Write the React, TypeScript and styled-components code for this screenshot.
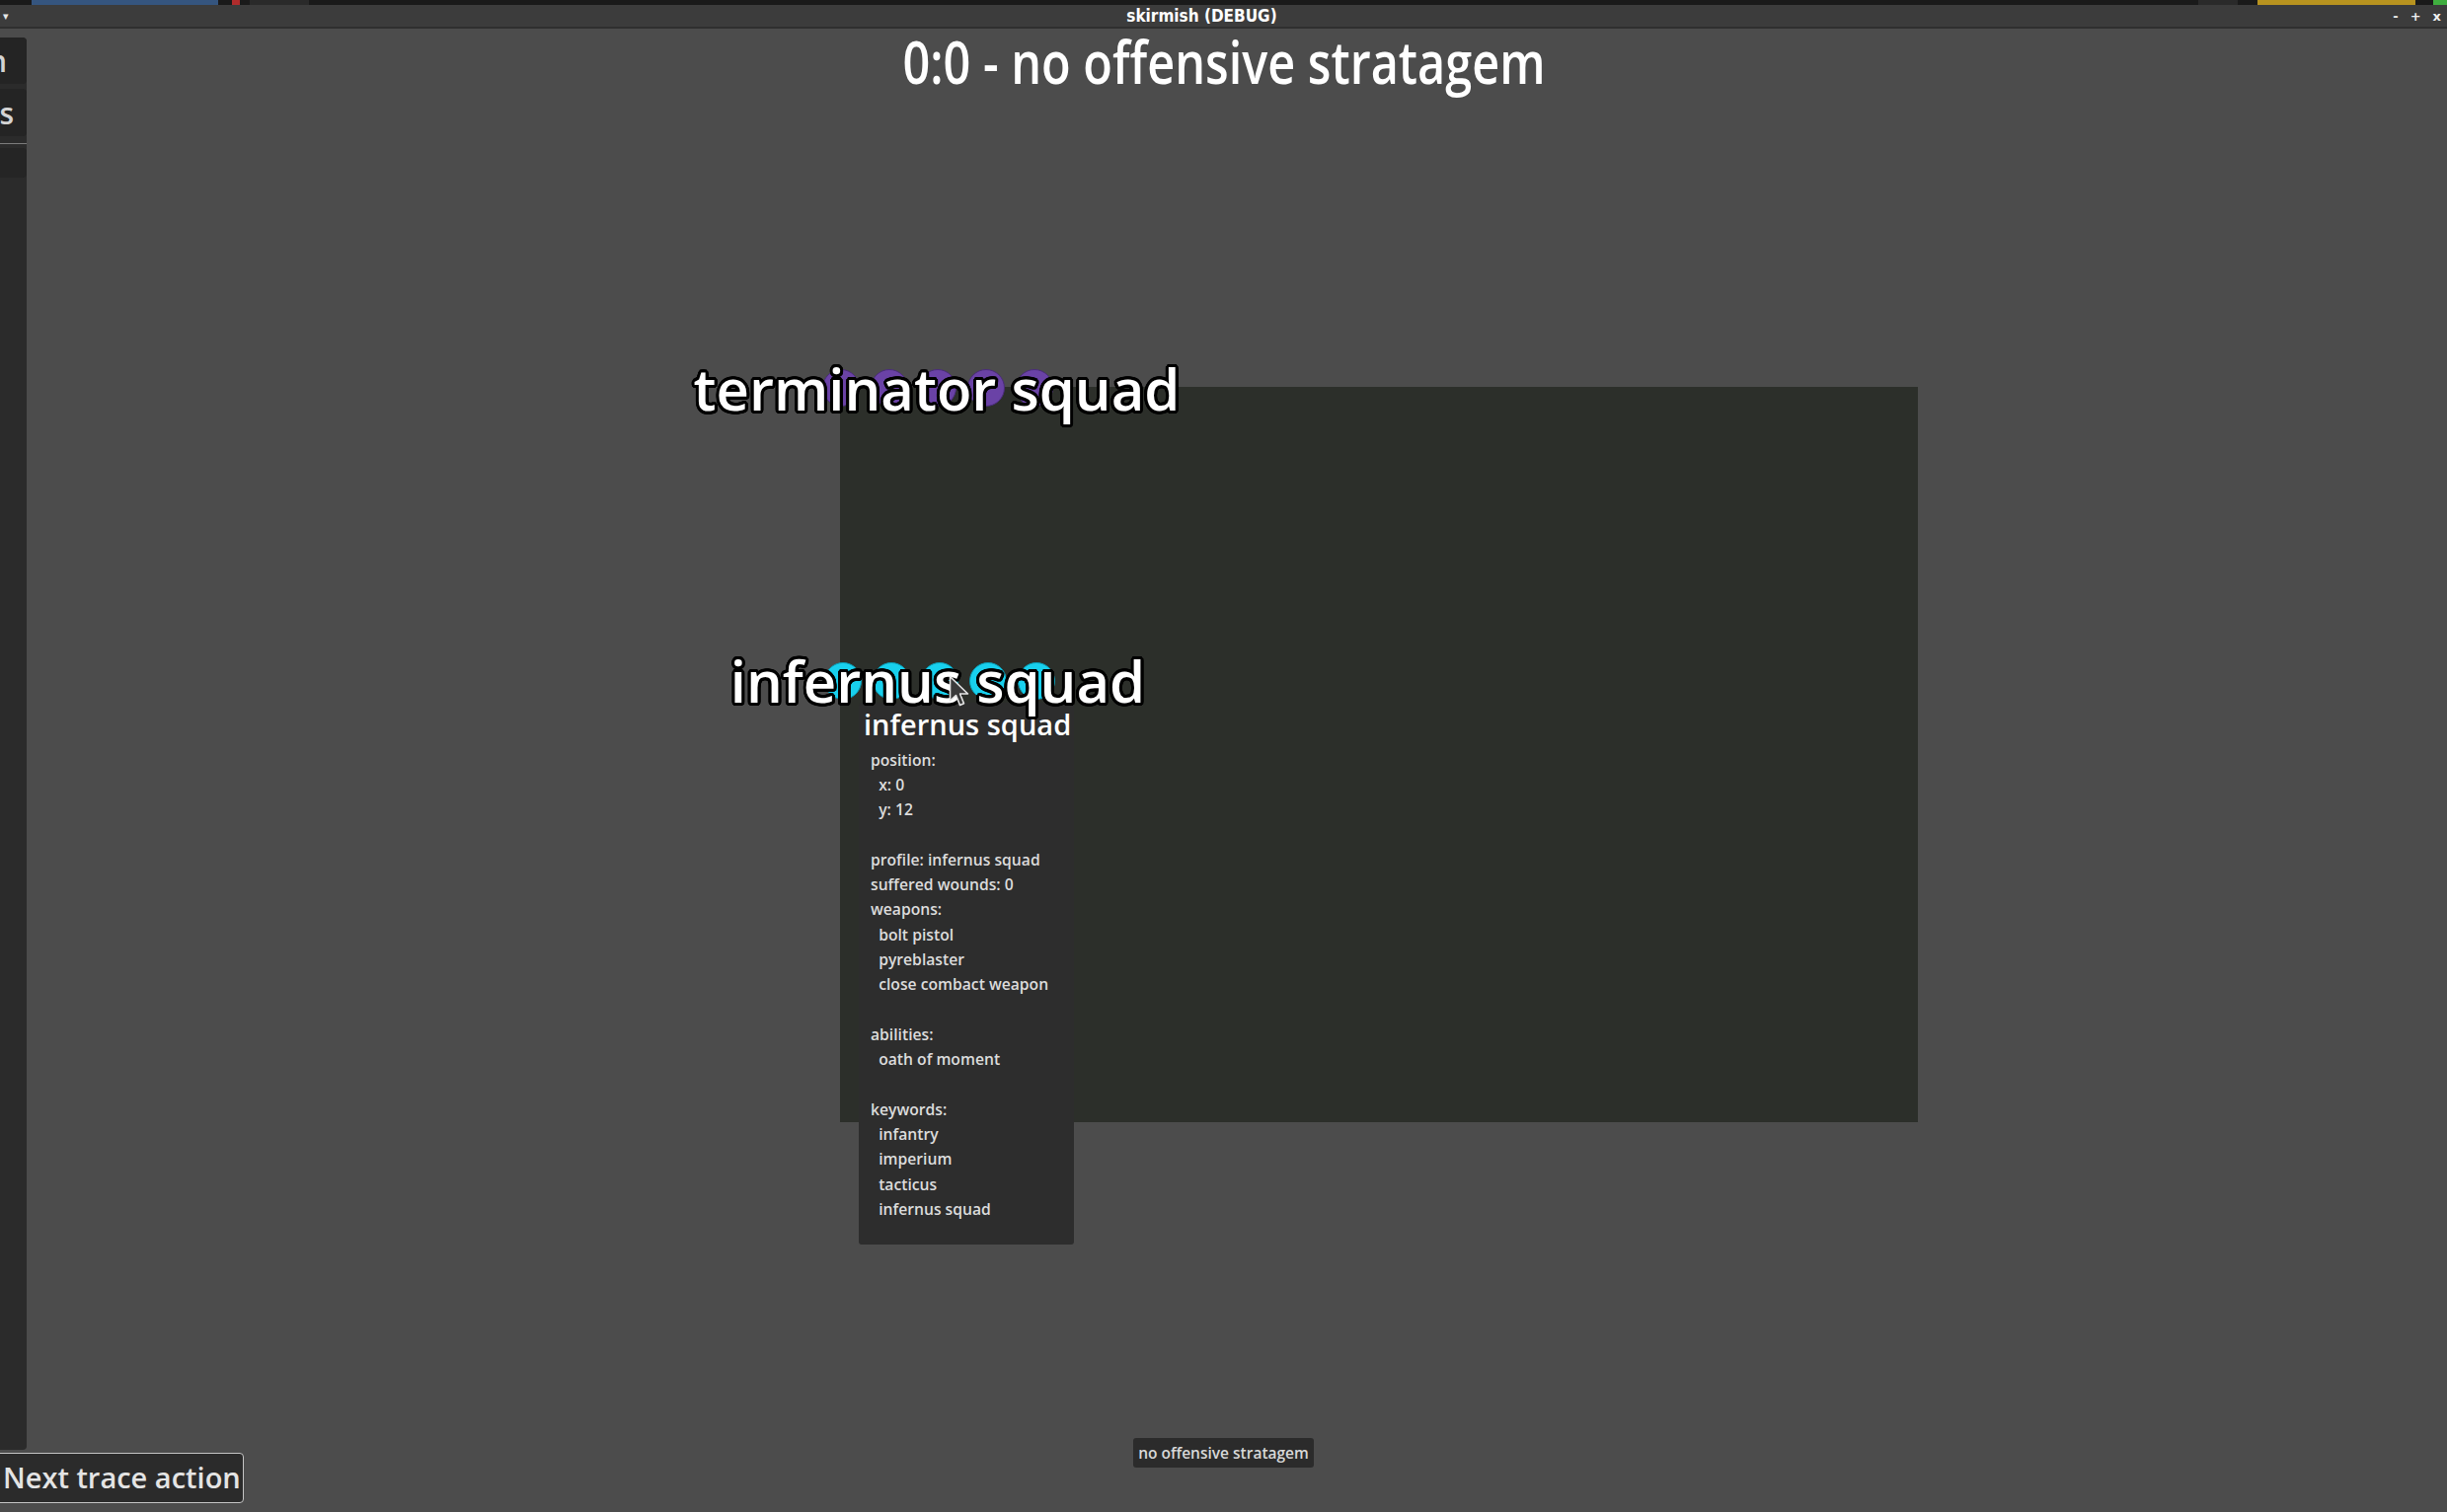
import React from "react";
import styled, { createGlobalStyle } from "styled-components";

const Global = createGlobalStyle`
  html, body { margin: 0; padding: 0; background: #4c4c4c; overflow: hidden; }
  #root { width: 2479px; height: 1532px; }
  * { box-sizing: border-box; }
`;

const outline = (r: number, color: string) => {
  const parts: string[] = [];
  for (let i = 0; i < 24; i++) {
    const a = (i / 24) * Math.PI * 2;
    parts.push(`${(Math.cos(a) * r).toFixed(2)}px ${(Math.sin(a) * r).toFixed(2)}px 0 ${color}`);
  }
  return parts.join(", ");
};

const Screen = styled.div`
  width: 2479px;
  height: 1532px;
  display: flex;
  flex-direction: column;
  font-family: "Open Sans", "Noto Sans", sans-serif;
  background: #4c4c4c;
  overflow: hidden;
`;

const SystemStrip = styled.div`
  height: 5px;
  background: #1a1a1a;
  display: flex;
  flex-shrink: 0;
`;

const StripItem = styled.div<{ $w: number; $color: string; $ml?: number }>`
  width: ${(p) => p.$w}px;
  margin-left: ${(p) => p.$ml ?? 0}px;
  background: ${(p) => p.$color};
`;

const StripSpacer = styled.div`
  flex: 1;
`;

const TitleBar = styled.div`
  height: 22px;
  flex-shrink: 0;
  background: #3c3c3c;
  display: grid;
  grid-template-columns: 36px 1fr 80px;
  align-items: center;
  color: #ffffff;
`;

const MenuArrow = styled.div`
  font-family: "DejaVu Sans", sans-serif;
  font-size: 11px;
  padding-left: 3px;
  color: #e8e8e8;
`;

const WindowTitle = styled.div`
  text-align: center;
  font-family: "DejaVu Sans Condensed", "DejaVu Sans", sans-serif;
  font-stretch: condensed;
  font-weight: 700;
  font-size: 17px;
  line-height: 22px;
  white-space: nowrap;
`;

const Controls = styled.div`
  display: flex;
  justify-content: flex-end;
  gap: 12px;
  padding-right: 6px;
  font-family: "DejaVu Sans", sans-serif;
  font-weight: 700;
  font-size: 13px;
  color: #f0f0f0;
`;

const Separator = styled.div`
  height: 2px;
  flex-shrink: 0;
  background: #2f2f2f;
`;

const Viewport = styled.div`
  flex: 1;
  position: relative;
  background: #4c4c4c;
  overflow: hidden;
`;

const World = styled.div`
  position: absolute;
  inset: 0;
`;

const Board = styled.div`
  position: absolute;
  left: 851px;
  top: 363px;
  width: 1092px;
  height: 745px;
  background: #2c2f2a;
`;

const Token = styled.div<{ $fill: string; $edge: string }>`
  position: absolute;
  width: 38px;
  height: 38px;
  border-radius: 50%;
  background: ${(p) => p.$fill};
  border: 1.5px solid ${(p) => p.$edge};
  transform: translate(-50%, -50%);
`;

const UnitLabel = styled.div`
  position: absolute;
  transform: translate(-50%, -50%);
  font-size: 58px;
  font-weight: 600;
  line-height: 80px;
  color: #ffffff;
  white-space: nowrap;
  text-shadow: ${outline(3, "#000")}, ${outline(1.6, "#000")};
`;

const Tooltip = styled.div`
  position: absolute;
  left: 870px;
  top: 683px;
  width: 218px;
  background: #2d2d2d;
  border-radius: 3px;
  padding: 1px 0 23px 0;
`;

const TooltipTitle = styled.div`
  font-size: 29px;
  font-weight: 600;
  line-height: 41px;
  color: #ffffff;
  padding-left: 5px;
  white-space: nowrap;
`;

const TooltipBody = styled.div`
  margin-top: 3.5px;
  padding-left: 12px;
  font-size: 15.7px;
  font-weight: 600;
  line-height: 25.3px;
  color: #dcdcdc;
  white-space: pre;
`;

const Cursor = styled.svg`
  position: absolute;
  left: 961px;
  top: 655px;
`;

const Hud = styled.div`
  position: absolute;
  inset: 0;
  display: flex;
`;

const LeftColumn = styled.div`
  width: 27px;
  flex-shrink: 0;
  display: flex;
  flex-direction: column;
  padding: 9px 0 9px;
  gap: 3px;
`;

const Sidebar = styled.div`
  flex: 1;
  background: #2b2b2b;
  border-radius: 0 4px 4px 0;
  display: flex;
  flex-direction: column;
  overflow: hidden;
`;

const SideButton = styled.div<{ $h: number; $pr: number; $mt?: number }>`
  height: ${(p) => p.$h}px;
  margin-top: ${(p) => p.$mt ?? 0}px;
  background: #242424;
  border-radius: 0 4px 4px 0;
  display: flex;
  justify-content: flex-end;
  align-items: center;
  padding-right: ${(p) => p.$pr}px;
  font-size: 30px;
  font-weight: 600;
  color: #d4d4d4;
  white-space: nowrap;
  overflow: hidden;
  flex-shrink: 0;
`;

const SideRule = styled.div`
  height: 1px;
  margin-top: 7px;
  background: #7c7c7c;
  flex-shrink: 0;
`;

const SideItem = styled.div`
  height: 30px;
  margin-top: 4px;
  background: #252525;
  border-radius: 0 4px 4px 0;
  flex-shrink: 0;
`;

const NextButton = styled.div`
  align-self: flex-start;
  flex-shrink: 0;
  width: 253px;
  height: 51px;
  margin-left: -6px;
  border: 1.5px solid #c4c4c4;
  border-radius: 4px;
  background: #2b2b2b;
  padding-left: 8px;
  font-size: 29px;
  font-weight: 600;
  line-height: 48px;
  color: #e4e4e4;
  white-space: nowrap;
`;

const CenterColumn = styled.div`
  flex: 1;
  margin-right: 27px;
  display: flex;
  flex-direction: column;
  align-items: center;
`;

const HeadTitle = styled.div`
  margin-top: 3px;
  font-size: 60px;
  font-weight: 600;
  line-height: 60px;
  color: #ffffff;
  white-space: nowrap;
  transform: scaleX(0.81);
`;

const Spacer = styled.div`
  flex: 1;
`;

const StratagemTag = styled.div`
  margin-bottom: 45px;
  height: 30px;
  padding: 0 5px;
  background: #2b2b2b;
  border-radius: 3px;
  font-size: 15.5px;
  font-weight: 600;
  line-height: 30px;
  color: #d8d8d8;
  white-space: nowrap;
`;

const tokenXs = [852, 901, 950, 999, 1048];

const tooltipLines = [
  "position:",
  "  x: 0",
  "  y: 12",
  "",
  "profile: infernus squad",
  "suffered wounds: 0",
  "weapons:",
  "  bolt pistol",
  "  pyreblaster",
  "  close combact weapon",
  "",
  "abilities:",
  "  oath of moment",
  "",
  "keywords:",
  "  infantry",
  "  imperium",
  "  tacticus",
  "  infernus squad",
].join("\n");

export default function App() {
  return (
    <>
      <Global />
      <Screen>
        <SystemStrip>
          <StripItem $w={189} $ml={32} $color="#35557f" />
          <StripItem $w={8} $ml={14} $color="#b02c2c" />
          <StripItem $w={60} $ml={10} $color="#2a2a2a" />
          <StripSpacer />
          <StripItem $w={40} $color="#2a2a2a" />
          <StripItem $w={160} $ml={20} $color="#b8931f" />
          <StripItem $w={14} $ml={18} $color="#3fae3f" />
        </SystemStrip>
        <TitleBar>
          <MenuArrow>▾</MenuArrow>
          <WindowTitle>skirmish (DEBUG)</WindowTitle>
          <Controls>
            <span>-</span>
            <span>+</span>
            <span>x</span>
          </Controls>
        </TitleBar>
        <Separator />
        <Viewport>
          <World>
            <Board />
            <Tooltip>
              <TooltipTitle>infernus squad</TooltipTitle>
              <TooltipBody>{tooltipLines}</TooltipBody>
            </Tooltip>
            {tokenXs.map((x) => (
              <Token key={`t${x}`} $fill="#6a42a6" $edge="#4a2c7a" style={{ left: x, top: 364 }} />
            ))}
            {tokenXs.map((x) => (
              <Token key={`i${x}`} $fill="#18d0ee" $edge="#0a9ab2" style={{ left: x + 2, top: 661 }} />
            ))}
            <UnitLabel style={{ left: 949, top: 365 }}>terminator squad</UnitLabel>
            <UnitLabel style={{ left: 950, top: 661 }}>infernus squad</UnitLabel>
            <Cursor width="22" height="34" viewBox="0 0 22 34">
              <path
                d="M1.5 1.5 L1.5 26 L7.5 20.5 L11.5 30.5 L15.5 28.8 L11.6 19 L19.5 19 Z"
                fill="#3a3a3a"
                stroke="#e6e6e6"
                strokeWidth="1.6"
                strokeLinejoin="round"
              />
            </Cursor>
          </World>
          <Hud>
            <LeftColumn>
              <Sidebar>
                <SideButton $h={47} $pr={20}>Simulation</SideButton>
                <SideButton $h={48} $pr={13} $mt={5}>Units</SideButton>
                <SideRule />
                <SideItem />
              </Sidebar>
              <NextButton>Next trace action</NextButton>
            </LeftColumn>
            <CenterColumn>
              <HeadTitle>0:0 - no offensive stratagem</HeadTitle>
              <Spacer />
              <StratagemTag>no offensive stratagem</StratagemTag>
            </CenterColumn>
          </Hud>
        </Viewport>
      </Screen>
    </>
  );
}
